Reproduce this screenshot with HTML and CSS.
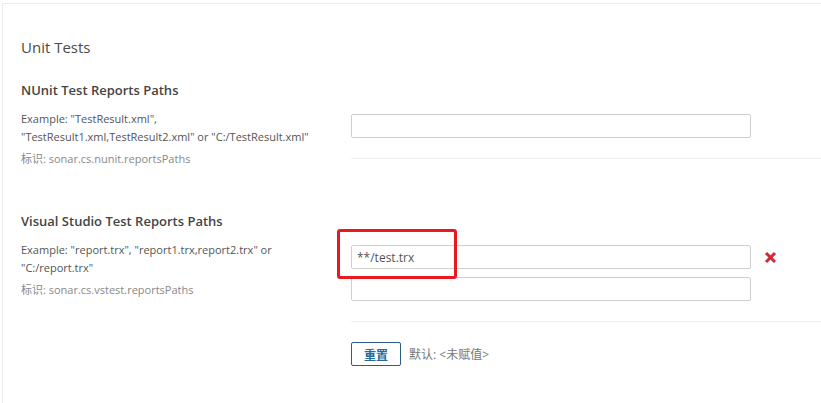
FILE: index.html
```html
<!DOCTYPE html>
<html lang="zh">
<head>
<meta charset="utf-8">
<title>Unit Tests</title>
<link rel="stylesheet" href="styles.css">
</head>
<body>
<div class="page">
  <h2 class="cat-title">Unit Tests</h2>

  <div class="def">
    <div class="def-left">
      <h3 class="def-name">NUnit Test Reports Paths</h3>
      <div class="def-desc">Example: "TestResult.xml", "TestResult1.xml,TestResult2.xml" or "C:/TestResult.xml"</div>
      <div class="def-key">标识: sonar.cs.nunit.reportsPaths</div>
    </div>
    <div class="def-right">
      <div class="field"><input class="text-input" type="text" value=""></div>
    </div>
  </div>

  <div class="def def-second">
    <div class="def-left">
      <h3 class="def-name">Visual Studio Test Reports Paths</h3>
      <div class="def-desc">Example: "report.trx", "report1.trx,report2.trx" or "C:/report.trx"</div>
      <div class="def-key">标识: sonar.cs.vstest.reportsPaths</div>
    </div>
    <div class="def-right">
      <div class="field">
        <div class="input-wrap">
          <input class="text-input" type="text" value="**/test.trx">
          <span class="highlight"></span>
        </div>
        <button class="del-btn" type="button" aria-label="删除">
          <svg width="13" height="13" viewBox="0 0 13 13"><path d="M2 2 L11 11 M11 2 L2 11" stroke="#d02a36" stroke-width="3" stroke-linecap="butt"/></svg>
        </button>
      </div>
      <div class="field field-next"><input class="text-input" type="text" value=""></div>
    </div>
  </div>

  <div class="actions">
    <button class="reset-btn" type="button">重置</button>
    <span class="default-val">默认: &lt;未赋值&gt;</span>
  </div>
</div>
</body>
</html>
```

FILE: styles.css
```css
html, body {
  margin: 0;
  padding: 0;
  background: #fff;
}
body {
  padding: 3px 0 0 2px;
  font-family: "Open Sans", "Noto Sans CJK SC", sans-serif;
  color: #444;
}
.page {
  border-top: 1px solid #ececec;
  border-left: 1px solid #ececec;
  padding: 31px 0 0 18px;
  height: 400px;
  box-sizing: border-box;
}
.cat-title {
  margin: 0 0 22px;
  font-size: 15px;
  line-height: 24px;
  font-weight: 400;
  color: #4a4a4a;
}
.def {
  display: flex;
  align-items: flex-start;
}
.def-second {
  margin-top: 44px;
}
.def-left {
  width: 330px;
  flex: none;
}
.def-name {
  margin: 0;
  font-size: 13px;
  line-height: 18px;
  font-weight: 600;
  color: #444;
}
.def-desc {
  margin-top: 11px;
  width: 300px;
  font-size: 11px;
  line-height: 18px;
  color: #555;
}
.def-key {
  margin-top: 4px;
  font-size: 11px;
  line-height: 18px;
  color: #888;
}
.def-right {
  flex: 1;
  padding: 33px 0 20px;
  border-bottom: 1px solid #f0f0f0;
}
.field {
  display: flex;
  align-items: center;
}
.field-next {
  margin-top: 8px;
}
.input-wrap {
  position: relative;
}
.text-input {
  display: block;
  width: 400px;
  height: 24px;
  box-sizing: border-box;
  border: 1px solid #cfcfcf;
  border-radius: 2px;
  padding: 0 5px;
  font-family: "Open Sans", "Noto Sans CJK SC", sans-serif;
  font-size: 12px;
  color: #555;
  background: #fff;
}
.highlight {
  position: absolute;
  left: -14px;
  top: -16px;
  width: 120px;
  height: 50px;
  box-sizing: border-box;
  border: 3px solid #e8191f;
  border-radius: 3px;
  pointer-events: none;
}
.del-btn {
  margin-left: 13px;
  padding: 0;
  border: 0;
  background: none;
  width: 13px;
  height: 13px;
  display: flex;
}
.actions {
  margin: 20px 0 0 330px;
  display: flex;
  align-items: center;
}
.reset-btn {
  width: 50px;
  height: 24px;
  box-sizing: border-box;
  border: 1px solid #2c5d80;
  border-radius: 2px;
  background: #fff;
  color: #236a97;
  font-family: "Noto Sans CJK SC", sans-serif;
  font-weight: 700;
  font-size: 12px;
  padding: 0;
}
.default-val {
  margin-left: 8px;
  font-size: 12px;
  color: #777;
}
```
